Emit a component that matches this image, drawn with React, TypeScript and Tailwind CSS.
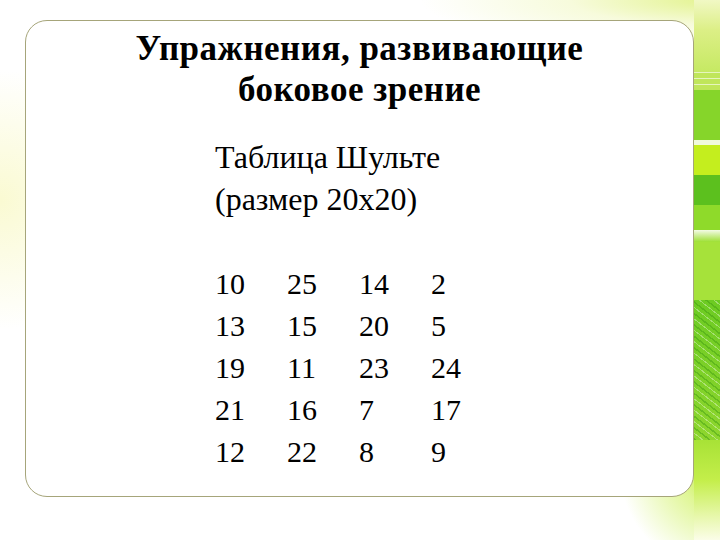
import React from "react";

const rows = [
  ["10", "25", "14", "2"],
  ["13", "15", "20", "5"],
  ["19", "11", "23", "24"],
  ["21", "16", "7", "17"],
  ["12", "22", "8", "9"],
];

function GreenStrip() {
  return (
    <div className="flex flex-col w-[26px] h-[540px] shrink-0">
      <div className="h-[30px] bg-[linear-gradient(to_bottom,#f1f8c4,#dcef86)]" />
      <div className="h-[42px] bg-[linear-gradient(to_bottom,#dcef86,#c6e963)]" />
      <div className="h-[18px] bg-[#c0e65a] bg-[repeating-linear-gradient(to_bottom,rgba(255,255,255,0.6)_0_1px,rgba(255,255,255,0)_1px_6px)]" />
      <div className="h-[50px] bg-[#86d52a]" />
      <div className="h-[5px] bg-[#f0fadc]" />
      <div className="h-[30px] bg-[#c4ee1e]" />
      <div className="h-[30px] bg-[#5cc01e]" />
      <div className="h-[25px] bg-[#8fda2a]" />
      <div className="h-[12px] bg-[linear-gradient(to_bottom,#f4fbe6,#9ee034)]" />
      <div className="h-[58px] bg-[#a6e23a]" />
      <div className="h-[140px] bg-[repeating-linear-gradient(38deg,rgba(62,154,18,0.45)_0_1.5px,rgba(255,255,255,0)_1.5px_5px,rgba(255,255,255,0.35)_5px_6px,rgba(255,255,255,0)_6px_9px),linear-gradient(to_bottom,#6ccb22,#8ed62e)]" />
      <div className="flex-1 bg-[linear-gradient(to_bottom,#a8e236,#c4ee4a_40%,#e6f7a8_75%,#fbfde8)]" />
    </div>
  );
}

export default function App() {
  return (
    <div className="flex w-[720px] h-[540px] overflow-hidden text-black bg-white bg-[radial-gradient(circle_at_0_200px,#fafad2,rgba(255,255,255,0)_130px),radial-gradient(ellipse_300px_50px_at_720px_0,#e2f38c,rgba(245,250,211,0.8)_50%,rgba(255,255,255,0)_100%),radial-gradient(circle_at_720px_470px,#b6ea2a,rgba(216,244,124,0.8)_40px,rgba(255,255,255,0)_100px)]">
      <div className="flex-1 pt-[20px] pl-[25px]">
        <div className="w-[669px] h-[477px] rounded-[22px] border border-[#a6a57a] bg-white flex flex-col">
          <div className="pt-[7px] text-center font-bold text-[35px] leading-[41px] tracking-[0.5px] font-['Liberation_Serif']">
            <div>Упражнения, развивающие</div>
            <div>боковое зрение</div>
          </div>
          <div className="pl-[189px] pt-[26px] text-[32px] leading-[42px] font-['Liberation_Serif']">
            <div>Таблица Шульте</div>
            <div>(размер 20х20)</div>
          </div>
          <div className="pl-[189px] pt-[43px] text-[30px] leading-[42px] font-['Liberation_Serif']">
            {rows.map((r, i) => (
              <div key={i} className="grid grid-cols-[72px_72px_72px_72px]">
                {r.map((n, j) => (
                  <div key={j}>{n}</div>
                ))}
              </div>
            ))}
          </div>
        </div>
      </div>
      <GreenStrip />
    </div>
  );
}
